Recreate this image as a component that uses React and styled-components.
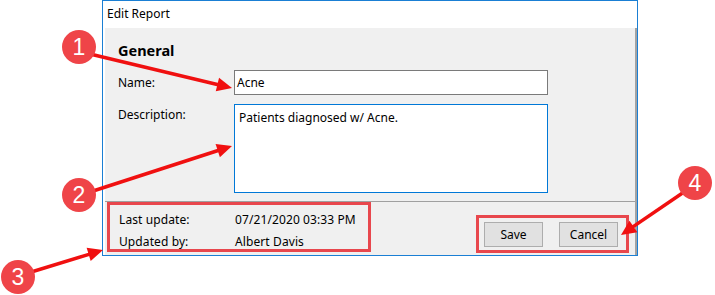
import React from "react";
import styled, { createGlobalStyle } from "styled-components";

const GlobalStyle = createGlobalStyle`
  html, body {
    margin: 0;
    padding: 0;
    background: #fff;
  }
  body {
    font-family: "Noto Sans", "Open Sans", sans-serif;
    font-size: 12px;
    color: #000;
  }
`;

const Page = styled.div`
  position: relative;
  width: 715px;
  height: 295px;
  overflow: hidden;
`;

const Window = styled.div`
  margin-left: 102px;
  width: 536px;
  height: 256px;
  box-sizing: border-box;
  border: 1px solid #1a7fd4;
  display: flex;
  flex-direction: column;
  background: #fff;
`;

const TitleBar = styled.div`
  height: 27px;
  display: flex;
  align-items: center;
  padding-left: 4px;
  font-size: 12px;
  line-height: 1;
  padding-bottom: 2px;
  box-sizing: border-box;
`;

const Body = styled.div`
  flex: 1;
  margin-left: 2px;
  background: #f0f0f0;
  border-right: 2px solid #a3a3a3;
  display: flex;
  flex-direction: column;
`;

const Form = styled.div`
  height: 174px;
  padding: 10px 0 0 13px;
  box-sizing: border-box;
  border-bottom: 1px solid #a0a0a0;
`;

const Heading = styled.div`
  font-size: 14.5px;
  font-weight: 700;
  height: 24px;
  line-height: 24px;
  margin-bottom: 8px;
`;

const Row = styled.div`
  display: flex;
  align-items: ${(p) => (p.$top ? "flex-start" : "center")};
  margin-bottom: ${(p) => p.$gap || 0}px;
`;

const Label = styled.div`
  width: 116px;
  padding-top: ${(p) => (p.$top ? "2px" : "0")};
`;

const Input = styled.div`
  width: 314px;
  height: 25px;
  box-sizing: border-box;
  border: 1px solid #7a7a7a;
  background: #fff;
  padding: 0 2px;
  display: flex;
  align-items: center;
`;

const TextArea = styled.div`
  width: 314px;
  height: 89px;
  box-sizing: border-box;
  border: 1px solid #0078d7;
  background: #fff;
  padding: 4px 4px;
`;

const Footer = styled.div`
  flex: 1;
  display: flex;
  justify-content: space-between;
  align-items: flex-start;
  padding: 0 6px 0 2px;
`;

const InfoBox = styled.div`
  width: 264px;
  height: 50px;
  box-sizing: border-box;
  border: 3px solid #e8474d;
  padding: 6px 0 0 9px;
  display: grid;
  grid-template-columns: 116px auto;
  row-gap: 4px;
  line-height: 18px;
  letter-spacing: 0.1px;
`;

const ButtonBox = styled.div`
  margin-top: 13px;
  width: 153px;
  height: 38px;
  box-sizing: border-box;
  border: 3px solid #e8474d;
  display: flex;
  align-items: center;
  justify-content: space-between;
  padding: 0 8px 0 5px;
`;

const Button = styled.div`
  width: 59px;
  height: 25px;
  box-sizing: border-box;
  background: #e1e1e1;
  border: 1px solid #adadad;
  display: flex;
  align-items: center;
  justify-content: center;
`;

const Overlay = styled.svg`
  position: absolute;
  left: 0;
  top: 0;
  pointer-events: none;
`;

const RED = "#f01010";
const CIRCLE = "#ef4448";

const Arrow = ({ x1, y1, x2, y2 }) => {
  const dx = x2 - x1;
  const dy = y2 - y1;
  const len = Math.hypot(dx, dy);
  const ux = dx / len;
  const uy = dy / len;
  const headLen = 15;
  const headW = 7;
  const bx = x2 - ux * headLen;
  const by = y2 - uy * headLen;
  const pts = [
    [x2, y2],
    [bx - uy * headW, by + ux * headW],
    [bx + uy * headW, by - ux * headW],
  ]
    .map((p) => p.join(","))
    .join(" ");
  return (
    <g>
      <line x1={x1} y1={y1} x2={bx + ux * 2} y2={by + uy * 2} stroke={RED} strokeWidth="3.5" />
      <polygon points={pts} fill={RED} />
    </g>
  );
};

const Badge = ({ cx, cy, n }) => (
  <g>
    <circle cx={cx} cy={cy} r="17" fill={CIRCLE} />
    <text
      x={cx}
      y={cy + 8}
      textAnchor="middle"
      fill="#fff"
      fontFamily="Liberation Sans, Arial, sans-serif"
      fontSize="23"
    >
      {n}
    </text>
  </g>
);

export default function App() {
  return (
    <Page>
      <GlobalStyle />
      <Window>
        <TitleBar>Edit Report</TitleBar>
        <Body>
          <Form>
            <Heading>General</Heading>
            <Row $gap={9}>
              <Label>Name:</Label>
              <Input>Acne</Input>
            </Row>
            <Row $top>
              <Label $top>Description:</Label>
              <TextArea>Patients diagnosed w/ Acne.</TextArea>
            </Row>
          </Form>
          <Footer>
            <InfoBox>
              <span>Last update:</span>
              <span>07/21/2020 03:33 PM</span>
              <span>Updated by:</span>
              <span>Albert Davis</span>
            </InfoBox>
            <ButtonBox>
              <Button>Save</Button>
              <Button>Cancel</Button>
            </ButtonBox>
          </Footer>
        </Body>
      </Window>
      <Overlay width="715" height="295" viewBox="0 0 715 295">
        <Arrow x1={90} y1={54} x2={232} y2={88} />
        <Arrow x1={90} y1={192} x2={232} y2={146} />
        <Arrow x1={28} y1={273} x2={103} y2={250} />
        <Arrow x1={684} y1={192} x2={621} y2={235} />
        <Badge cx={79} cy={47} n="1" />
        <Badge cx={79} cy={195} n="2" />
        <Badge cx={18} cy={277} n="3" />
        <Badge cx={695} cy={183} n="4" />
      </Overlay>
    </Page>
  );
}
